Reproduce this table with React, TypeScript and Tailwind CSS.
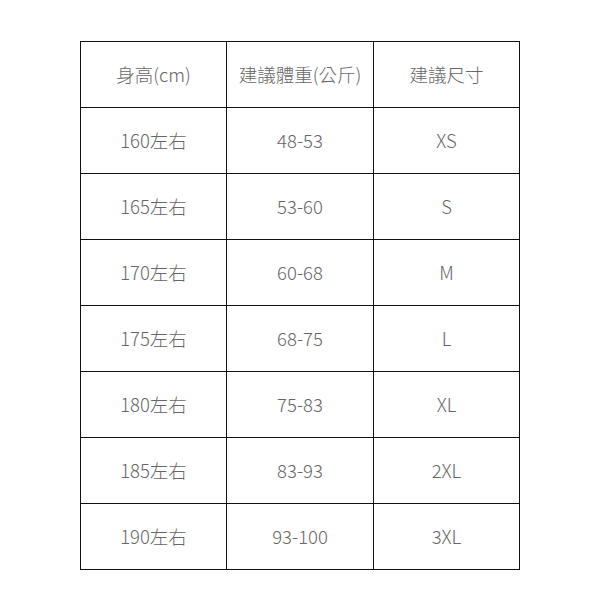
const rows = [
  ['身高(cm)', '建議體重(公斤)', '建議尺寸'],
  ['160左右', '48-53', 'XS'],
  ['165左右', '53-60', 'S'],
  ['170左右', '60-68', 'M'],
  ['175左右', '68-75', 'L'],
  ['180左右', '75-83', 'XL'],
  ['185左右', '83-93', '2XL'],
  ['190左右', '93-100', '3XL'],
];

export default function App() {
  return (
    <div className="w-[600px] h-[600px] bg-white pt-[41px] pl-[80px]">
      <div
        className="grid grid-cols-[146px_147px_146px] w-fit border-l border-t border-[#111]"
        style={{ fontFamily: '"Noto Sans CJK TC", "Noto Sans", sans-serif' }}
      >
        {rows.flat().map((c, i) => (
          <div
            key={i}
            className="h-[66px] flex items-center justify-center border-r border-b border-[#111] text-[18.5px] font-light text-[#666]"
          >
            {c}
          </div>
        ))}
      </div>
    </div>
  );
}
